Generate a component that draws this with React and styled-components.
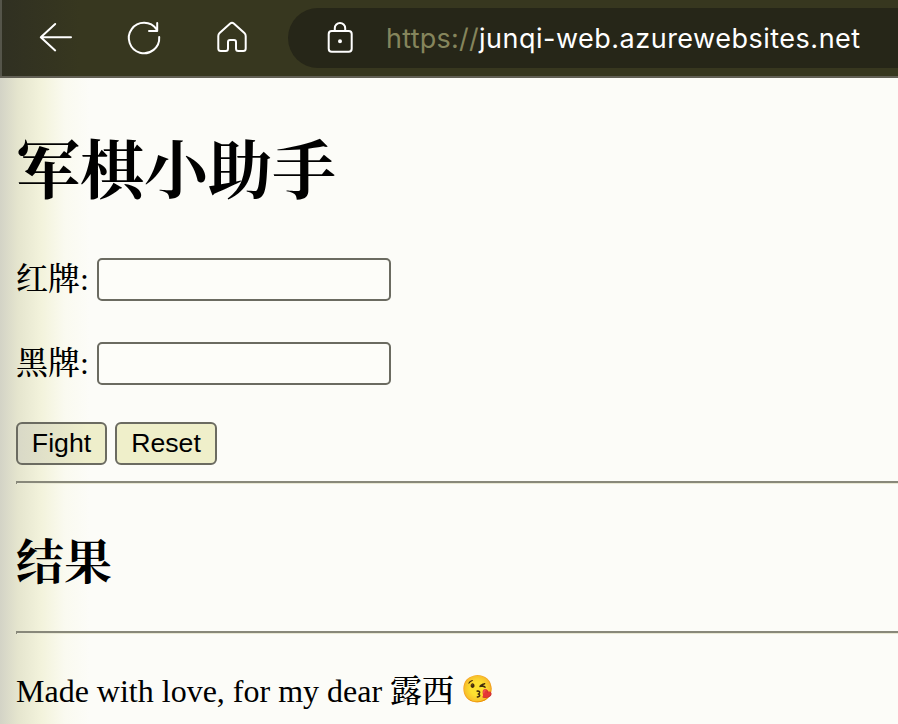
import React from "react";
import styled, { createGlobalStyle } from "styled-components";

const GlobalStyle = createGlobalStyle`
  html, body { margin: 0; padding: 0; }
  body { width: 898px; height: 724px; overflow: hidden; background: #fcfcf8; }
  *, *::before, *::after { box-sizing: border-box; }
`;

const serif = `"Liberation Serif", "Songti SC", "Noto Serif CJK SC", "Noto Sans CJK SC", serif`;

const Browser = styled.div`
  width: 898px;
  height: 724px;
  display: flex;
  flex-direction: column;
  overflow: hidden;
`;

const Toolbar = styled.header`
  height: 78px;
  flex: none;
  display: flex;
  align-items: flex-start;
  padding: 8px 0 0 36px;
  background: linear-gradient(90deg, #55554a 0 2px, #34342000 2px), linear-gradient(90deg, #303022, #37371f 80px);
  border-bottom: 2px solid #626055;
`;

const NavButton = styled.button`
  width: 40px;
  height: 60px;
  margin-right: 48px;
  padding: 0;
  border: 0;
  background: none;
  color: #fff;
  display: flex;
  align-items: center;
  justify-content: center;
  svg { flex: none; }
`;

const AddressBar = styled.div`
  flex: 1;
  height: 60px;
  margin-left: -12px;
  padding-left: 36px;
  display: flex;
  align-items: center;
  color: #fff;
  background: #262618;
  border-radius: 30px 0 0 30px;
`;

const Url = styled.span`
  margin-left: 30px;
  padding-top: 2px;
  font: 400 27px/60px Inter, sans-serif;
  white-space: nowrap;
`;

const Scheme = styled.span`
  color: #85855c;
  letter-spacing: 0.25px;
`;

const Host = styled.span`
  letter-spacing: 0.5px;
`;

const Icon = styled.svg`
  display: block;
  fill: none;
  stroke: currentColor;
  stroke-width: 2;
  stroke-linecap: round;
  stroke-linejoin: round;
`;

const Page = styled.main`
  flex: 1;
  padding: 54px 0 0 16px;
  color: #000;
  font: 32px/36px ${serif};
  background: linear-gradient(90deg, #d3d3c6 0, #e5e5ce 18px, #f3f3dc 42px, #fafaf0 65px, #fcfcf8 90px);
`;

const Title = styled.h1`
  margin: 0;
  height: 80px;
  font: 700 64px/80px ${serif};
`;

const Field = styled.label`
  height: 43px;
  margin-top: ${(p) => p.$gap}px;
  display: flex;
  align-items: center;
`;

const FieldName = styled.span`
  width: 81px;
  padding-bottom: 2px;
  font-weight: 500;
  white-space: nowrap;
`;

const TextInput = styled.input`
  width: 294px;
  height: 43px;
  padding: 2px 4px;
  border: 2px solid #6b6b61;
  border-radius: 5px;
  background: #fdfdf9;
  font: 26.67px "Liberation Sans", Arial, sans-serif;
  outline: none;
`;

const Actions = styled.div`
  display: flex;
  gap: 8px;
  margin-top: 37px;
`;

const ActionButton = styled.button`
  width: ${(p) => p.$width}px;
  height: 43px;
  padding: 0 0 2px;
  border: 2px solid #6b6b61;
  border-radius: 6px;
  background: ${(p) => (p.$shaded ? "linear-gradient(90deg, #d9d9c7, #eeeecb 70px)" : "#efefca")};
  color: #000;
  font: 26.67px/36px "Liberation Sans", Arial, sans-serif;
`;

const Rule = styled.hr`
  height: 3px;
  margin: ${(p) => p.$gap}px 0 0;
  border: 0;
  border-top: 2px solid #88887a;
  border-left: 1px solid #88887a;
  background: #e9e9d4;
`;

const ResultTitle = styled.h2`
  margin: 47px 0 0;
  height: 64px;
  font: 700 48px/64px ${serif};
`;

const Footer = styled.p`
  margin: 39px 0 0;
  height: 36px;
  font-weight: 500;
  white-space: nowrap;
`;

const Emoji = styled.span`
  display: inline-block;
  line-height: 26px;
  font-size: 26.5px;
  transform: translate(-1px, -4px);
  font-family: "Apple Color Emoji", "Noto Color Emoji", sans-serif;
`;

export default function App() {
  return (
    <>
      <GlobalStyle />
      <Browser>
        <Toolbar>
          <NavButton aria-label="Back">
            <Icon width="40" height="40" viewBox="0 0 40 40">
              <path d="M19.2 6 4.8 19.2 19.2 32.4M5 19.2H35" />
            </Icon>
          </NavButton>
          <NavButton aria-label="Reload">
            <Icon width="40" height="40" viewBox="0 0 40 40">
              <path d="M35.2 19A15.2 15.2 0 1 1 32.6 11.5M33.2 5V13H25" />
            </Icon>
          </NavButton>
          <NavButton aria-label="Home">
            <Icon width="40" height="40" viewBox="0 0 40 40">
              <path d="M18.2 5.5Q20 4 21.8 5.5L32.4 15Q33.7 16.2 33.7 18V30.5Q33.7 33 31.2 33H26.3Q24 33 24 30.5V24Q24 22 22 22H18Q16 22 16 24V30.5Q16 33 13.7 33H8.8Q6.3 33 6.3 30.5V18Q6.3 16.2 7.6 15Z" />
            </Icon>
          </NavButton>
          <AddressBar>
            <Icon width="32" height="40" viewBox="0 0 32 40">
              <rect x="4.7" y="13" width="23" height="20.7" rx="3" />
              <path d="M10.8 12.5V10.2A5.2 5.2 0 0 1 21.2 10.2V12.5" />
              <circle cx="16" cy="23.3" r="1" fill="currentColor" />
            </Icon>
            <Url>
              <Scheme>https://</Scheme>
              <Host>junqi-web.azurewebsites.net</Host>
            </Url>
          </AddressBar>
        </Toolbar>
        <Page>
          <Title>军棋小助手</Title>
          <Field $gap={46}>
            <FieldName>红牌:</FieldName>
            <TextInput />
          </Field>
          <Field $gap={41}>
            <FieldName>黑牌:</FieldName>
            <TextInput />
          </Field>
          <Actions>
            <ActionButton $width={91} $shaded>Fight</ActionButton>
            <ActionButton $width={102}>Reset</ActionButton>
          </Actions>
          <Rule $gap={16} />
          <ResultTitle>结果</ResultTitle>
          <Rule $gap={36} />
          <Footer>
            Made with love, for my dear 露西 <Emoji>😘</Emoji>
          </Footer>
        </Page>
      </Browser>
    </>
  );
}
